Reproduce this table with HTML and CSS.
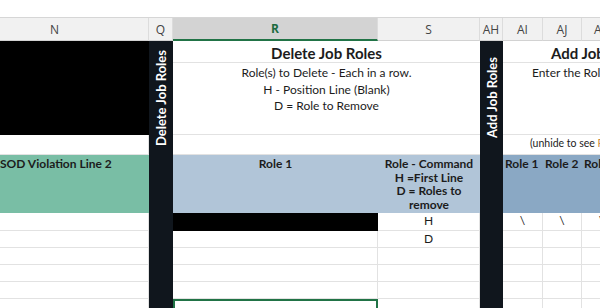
FILE: index.html
```html
<!DOCTYPE html>
<html lang="en">
<head>
    <meta charset="UTF-8">
    <title>Job Roles</title>
    <link rel="stylesheet" href="styles.css">
</head>
<body>
    <div class="sheet">
        <div class="topbar"></div>

        <!-- column letters -->
        <div class="colhead colhead-n">N</div>
        <div class="colhead">Q</div>
        <div class="colhead selected">R</div>
        <div class="colhead">S</div>
        <div class="colhead">AH</div>
        <div class="colhead">AI</div>
        <div class="colhead">AJ</div>
        <div class="colhead">AK</div>

        <div class="blackout n-top"></div>

        <div class="divider q-col">
            <div class="divider-label"><span>Delete Job Roles</span></div>
        </div>

        <div class="cell title del-title">Delete Job Roles</div>
        <div class="cell note del-note">
            Role(s) to Delete - Each in a row.<br>
            H - Position Line (Blank)<br>
            D = Role to Remove
        </div>

        <div class="divider ah-col">
            <div class="divider-label"><span>Add Job Roles</span></div>
        </div>

        <div class="cell title add-title">Add Job Roles</div>
        <div class="cell note add-note">Enter the Roles to Add - Each in a column.</div>

        <div class="cell n-gap"></div>
        <div class="cell del-gap"></div>
        <div class="cell small add-gap">(unhide to see <span class="hint">Role IDs</span>)</div>

        <!-- table heads -->
        <div class="cell head green n-head">SOD Violation Line 2</div>
        <div class="cell head blue center r-head">Role 1</div>
        <div class="cell head blue center s-head">Role - Command<br>H =First Line<br>D = Roles to<br>remove</div>
        <div class="cell head steel ai-head">Role 1</div>
        <div class="cell head steel aj-head">Role 2</div>
        <div class="cell head steel ak-head">Role 3</div>

        <!-- body rows -->
        <div class="cell"></div>
        <div class="cell blackout r-first"></div>
        <div class="cell center">H</div>
        <div class="cell center">\</div>
        <div class="cell center">\</div>
        <div class="cell center">\</div>

        <div class="cell"></div>
        <div class="cell"></div>
        <div class="cell center">D</div>
        <div class="cell"></div>
        <div class="cell"></div>
        <div class="cell"></div>

        <div class="cell"></div>
        <div class="cell"></div>
        <div class="cell"></div>
        <div class="cell"></div>
        <div class="cell"></div>
        <div class="cell"></div>

        <div class="cell"></div>
        <div class="cell"></div>
        <div class="cell"></div>
        <div class="cell"></div>
        <div class="cell"></div>
        <div class="cell"></div>

        <div class="cell"></div>
        <div class="cell"></div>
        <div class="cell"></div>
        <div class="cell"></div>
        <div class="cell"></div>
        <div class="cell"></div>

        <div class="cell"></div>
        <div class="cell active"></div>
        <div class="cell"></div>
        <div class="cell"></div>
        <div class="cell"></div>
        <div class="cell"></div>
    </div>
</body>
</html>
```

FILE: styles.css
```css
* {
    margin: 0;
    padding: 0;
    box-sizing: border-box;
}
body {
    font-family: Lato, "Open Sans", sans-serif;
    background-color: #fff;
    color: #1c1c1c;
    width: 600px;
    height: 308px;
    overflow: hidden;
}
.sheet {
    display: grid;
    /* N, Q, R, S, AH, AI, AJ, AK */
    grid-template-columns: 149px 24px 205px 102px 23px 40px 39px 40px;
    grid-template-rows: 18px 23px 22px 72px 20px 58px 18px repeat(5, 17px);
    grid-auto-flow: row dense;
}
.topbar {
    grid-column: 1 / -1;
    border-bottom: 1px solid #d6d6d6;
}

.colhead {
    background-color: #f1f1f1;
    border-right: 1px solid #dcdcdc;
    border-bottom: 1px solid #d2d2d2;
    font-family: "Open Sans", sans-serif;
    font-size: 12px;
    color: #444;
    display: flex;
    align-items: center;
    justify-content: center;
}
.colhead-n {
    justify-content: flex-start;
    padding-left: 50px;
}
.colhead.selected {
    background-color: #d3d3d3;
    color: #1d6b3f;
    font-weight: bold;
    border-bottom: 2px solid #217346;
}

.cell {
    border-right: 1px solid #e2e2e2;
    border-bottom: 1px solid #e2e2e2;
    font-size: 12px;
    line-height: 16px;
    white-space: nowrap;
    overflow: hidden;
}
.center {
    text-align: center;
}

.blackout {
    background-color: #000;
    border-color: #000;
}
.n-top {
    grid-column: 1;
    grid-row: 3 / 5;
}

.divider {
    background-color: #10161d;
    grid-row: 3 / -1;
}
.q-col { grid-column: 2; }
.ah-col { grid-column: 5; }
.divider-label {
    height: 114px;
    display: flex;
    align-items: center;
    justify-content: center;
}
.divider-label span {
    writing-mode: vertical-rl;
    transform: rotate(180deg);
    color: #fff;
    font-weight: bold;
    font-size: 13px;
    white-space: nowrap;
}

.title {
    font-size: 15px;
    font-weight: bold;
    line-height: 22px;
    padding-top: 1px;
}
.del-title {
    grid-column: 3 / 5;
    grid-row: 3;
    text-align: center;
    border-right: none;
}
.del-note {
    grid-column: 3 / 5;
    grid-row: 4;
    text-align: center;
    padding-top: 2px;
    line-height: 16.5px;
    border-right: none;
}
.add-title {
    grid-column: 6 / -1;
    grid-row: 3;
    padding-left: 48px;
    border-right: none;
}
.add-note {
    grid-column: 6 / -1;
    grid-row: 4;
    padding-left: 29px;
    padding-top: 2px;
    line-height: 16.5px;
    border-right: none;
}

.n-gap { grid-column: 1; grid-row: 5; }
.del-gap { grid-column: 3 / 5; grid-row: 5; border-right: none; }
.add-gap {
    grid-column: 6 / -1;
    grid-row: 5;
    border-right: none;
}
.small {
    font-size: 10.5px;
    line-height: 14px;
    padding-left: 27px;
    padding-top: 1px;
}
.hint {
    color: #c98a3c;
}

.head {
    font-weight: bold;
    line-height: 13.5px;
    padding-top: 2px;
    border: none;
}
.n-head { grid-column: 1; }
.r-head { grid-column: 3; }
.s-head { grid-column: 4; }
.ai-head { grid-column: 6; padding-left: 2px; }
.aj-head { grid-column: 7; padding-left: 2px; }
.ak-head { grid-column: 8; padding-left: 2px; }
.green { background-color: #79bea5; }
.blue { background-color: #b1c5d8; }
.steel { background-color: #8aa8c4; }

.r-first {
    border-color: #000;
}
.active {
    border: 2px solid #217346;
}
```
